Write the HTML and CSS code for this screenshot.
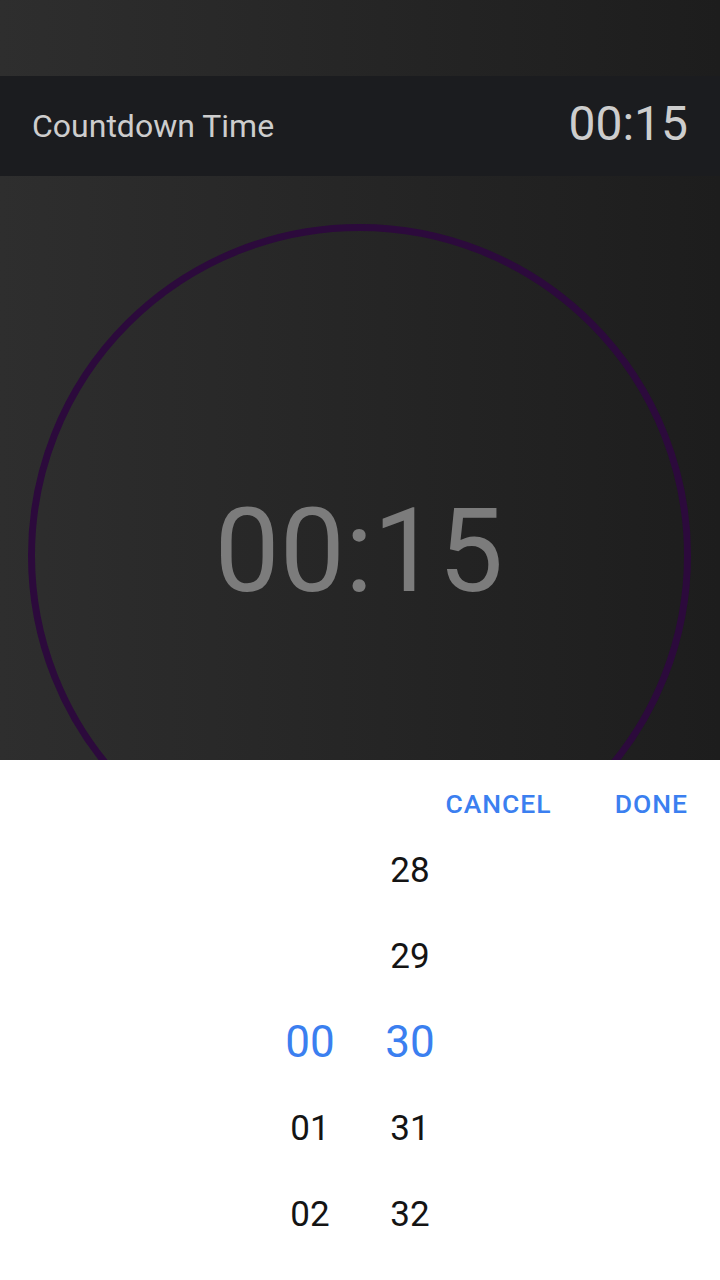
FILE: index.html
```html
<!DOCTYPE html>
<html>
<head>
<meta charset="utf-8">
<link rel="stylesheet" href="styles.css">
</head>
<body>
<div class="screen">
  <div class="top">
    <div class="status"></div>
    <div class="header">
      <span class="header-title">Countdown Time</span>
      <span class="header-time">00:15</span>
    </div>
    <div class="stage">
      <div class="ring">
        <span class="big-time">00:15</span>
      </div>
    </div>
  </div>
  <div class="sheet">
    <div class="actions">
      <span class="btn">CANCEL</span>
      <span class="btn">DONE</span>
    </div>
    <div class="picker">
      <div class="col">
        <div class="cell"></div>
        <div class="cell"></div>
        <div class="cell sel">00</div>
        <div class="cell">01</div>
        <div class="cell">02</div>
      </div>
      <div class="col">
        <div class="cell">28</div>
        <div class="cell">29</div>
        <div class="cell sel">30</div>
        <div class="cell">31</div>
        <div class="cell">32</div>
      </div>
    </div>
  </div>
</div>
</body>
</html>
```

FILE: styles.css
```css
* { box-sizing: border-box; }
html, body {
  margin: 0;
  padding: 0;
}
body {
  font-family: Roboto, "Noto Sans", sans-serif;
  background: #ffffff;
}
.screen {
  width: 720px;
  height: 1280px;
  display: flex;
  flex-direction: column;
  overflow: hidden;
}
.top {
  height: 760px;
  flex: none;
  overflow: hidden;
  background: linear-gradient(to right, #2e2e2e, #1d1d1d);
  display: flex;
  flex-direction: column;
}
.status {
  height: 76px;
  flex: none;
}
.header {
  height: 100px;
  flex: none;
  background: #1b1c1f;
  display: flex;
  align-items: center;
  justify-content: space-between;
  padding: 0 32px 0 32px;
}
.header-title {
  font-size: 32px;
  color: #cdcdcd;
}
.header-time {
  font-size: 48px;
  color: #cdcdcd;
  margin-bottom: 6px;
}
.stage {
  flex: none;
  display: flex;
  justify-content: center;
  padding-top: 48px;
}
.ring {
  flex: none;
  width: 663px;
  height: 663px;
  border: 7px solid #2c0a3c;
  border-radius: 50%;
  display: flex;
  align-items: center;
  justify-content: center;
  margin-left: -2px;
}
.big-time {
  font-size: 116px;
  color: #7c7c7c;
  padding-bottom: 9px;
}
.sheet {
  flex: 1;
  background: #ffffff;
  display: flex;
  flex-direction: column;
}
.actions {
  height: 67px;
  padding: 20px 32px 0 0;
  display: flex;
  align-items: center;
  justify-content: flex-end;
  gap: 63px;
}
.btn {
  font-size: 26.5px;
  font-weight: 500;
  letter-spacing: 1px;
  color: #3b7ff0;
}
.picker {
  display: grid;
  grid-template-columns: 100px 100px;
  justify-content: center;
}
.col {
  display: flex;
  flex-direction: column;
}
.cell {
  height: 86px;
  display: flex;
  align-items: center;
  justify-content: center;
  font-size: 35px;
  color: #141414;
}
.cell.sel {
  font-size: 44px;
  color: #3b7ff0;
}
```
